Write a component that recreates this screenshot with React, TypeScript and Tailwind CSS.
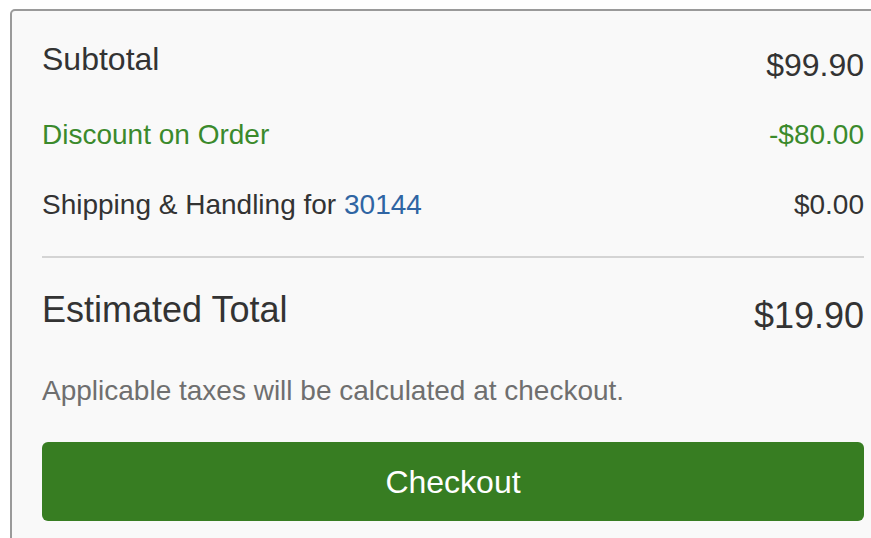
export default function App() {
  return (
    <div className="h-[538px] w-[871px] overflow-hidden bg-white font-['Liberation_Sans',Arial,sans-serif] text-[#333333]">
      <section className="ml-[10px] mt-[9px] w-[886px] rounded-[5px] border-2 border-[#9a9a9a] bg-[#f9f9f9] px-[30px] pt-8 pb-10">
        <div className="flex items-start justify-between">
          <span className="text-[32px] leading-[32px]">Subtotal</span>
          <span className="mt-[6px] text-[32px] leading-[32px]">$99.90</span>
        </div>

        <div className="mt-[40px] flex items-start justify-between text-[#3b8a2c]">
          <span className="text-[28px] leading-[28px]">Discount on Order</span>
          <span className="text-[28px] leading-[28px]">-$80.00</span>
        </div>

        <div className="mt-[42px] flex items-start justify-between">
          <span className="text-[28px] leading-[28px]">
            Shipping &amp; Handling for{" "}
            <a href="#" className="text-[#2f65a3]">
              30144
            </a>
          </span>
          <span className="text-[28px] leading-[28px]">$0.00</span>
        </div>

        <hr className="mt-[37px] h-[2px] border-0 bg-[#d4d4d4]" />

        <div className="mt-[34px] flex items-start justify-between">
          <span className="text-[36px] leading-[36px]">Estimated Total</span>
          <span className="mt-[6px] text-[36px] leading-[36px]">$19.90</span>
        </div>

        <p className="mt-[43px] text-[28px] leading-[28px] text-[#6f6f6f]">
          Applicable taxes will be calculated at checkout.
        </p>

        <button className="mt-[37px] flex h-[79px] w-full items-center justify-center rounded-[6px] bg-[#377d22] text-[32px] leading-[32px] text-white">
          Checkout
        </button>
      </section>
    </div>
  );
}
